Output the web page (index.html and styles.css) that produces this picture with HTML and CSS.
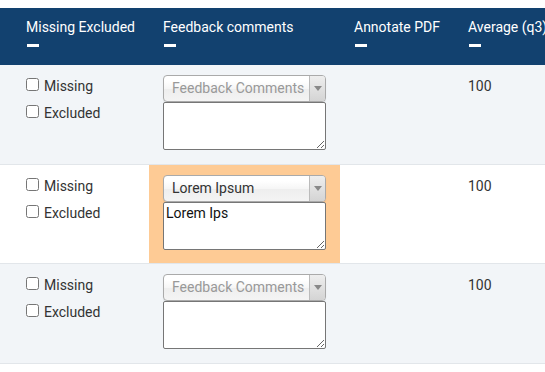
FILE: index.html
```html
<!DOCTYPE html>
<html>
<head>
<meta charset="utf-8">
<link rel="stylesheet" href="styles.css">
</head>
<body>
<div class="grid">
  <div class="row head">
    <div class="cell first"><div class="htext">Missing Excluded</div><span class="dash"></span></div>
    <div class="cell"><div class="htext">Feedback comments</div><span class="dash"></span></div>
    <div class="cell"><div class="htext">Annotate PDF</div><span class="dash"></span></div>
    <div class="cell"><div class="htext">Average (q3)</div><span class="dash"></span></div>
  </div>

  <div class="row body alt">
    <div class="cell first checks">
      <label class="chk"><input type="checkbox"><span>Missing</span></label>
      <label class="chk"><input type="checkbox"><span>Excluded</span></label>
    </div>
    <div class="cell fb">
      <div class="sel"><span class="sel-text placeholder">Feedback Comments</span><span class="sel-arrow"><i class="tri"></i></span></div>
      <textarea class="ta"></textarea>
    </div>
    <div class="cell"></div>
    <div class="cell num">100</div>
  </div>

  <div class="row body short">
    <div class="cell first checks">
      <label class="chk"><input type="checkbox"><span>Missing</span></label>
      <label class="chk"><input type="checkbox"><span>Excluded</span></label>
    </div>
    <div class="cell fb hl">
      <div class="sel"><span class="sel-text">Lorem Ipsum</span><span class="sel-arrow"><i class="tri"></i></span></div>
      <textarea class="ta">Lorem Ips</textarea>
    </div>
    <div class="cell"></div>
    <div class="cell num">100</div>
  </div>

  <div class="row body alt">
    <div class="cell first checks">
      <label class="chk"><input type="checkbox"><span>Missing</span></label>
      <label class="chk"><input type="checkbox"><span>Excluded</span></label>
    </div>
    <div class="cell fb">
      <div class="sel"><span class="sel-text placeholder">Feedback Comments</span><span class="sel-arrow"><i class="tri"></i></span></div>
      <textarea class="ta"></textarea>
    </div>
    <div class="cell"></div>
    <div class="cell num">100</div>
  </div>
</div>
</body>
</html>
```

FILE: styles.css
```css
html, body {
  margin: 0;
  padding: 0;
  background: #fff;
  overflow: hidden;
}
body {
  padding-top: 8px;
  font-family: Roboto, "Liberation Sans", sans-serif;
  font-size: 14px;
  color: #333;
  width: 545px;
}
.grid {
  width: 600px;
}
.row {
  display: grid;
  grid-template-columns: 149px 191px 114px 146px;
}
.cell {
  padding: 10px 14px 0 14px;
  white-space: nowrap;
  overflow: hidden;
}
.cell.first {
  padding-left: 26px;
}
.head {
  background: #12416f;
  color: #fff;
}
.head .cell {
  padding-top: 9px;
  padding-bottom: 18px;
}
.head .cell.first {
  padding-left: 26px;
}
.htext {
  line-height: 20px;
}
.dash {
  display: block;
  width: 12px;
  height: 3px;
  background: #fff;
  margin-top: 7px;
  margin-left: 1px;
}
.body {
  height: 100px;
  box-sizing: border-box;
  border-bottom: 1px solid #e2e6ea;
  background: #fff;
}
.body.short {
  height: 99px;
}
.body.alt {
  background: #f2f5f8;
}
.checks {
  display: flex;
  flex-direction: column;
  gap: 7px;
  padding-top: 11px;
}
.chk {
  display: flex;
  align-items: center;
  height: 20px;
  line-height: 20px;
}
.chk input {
  width: 13px;
  height: 13px;
  margin: -3px 5px 0 0;
}
.fb.hl {
  background: #fecb95;
}
.sel {
  display: flex;
  width: 163px;
  height: 27px;
  box-sizing: border-box;
  border: 1px solid #aaa;
  border-radius: 4px;
  background: linear-gradient(#fff 20%, #f6f6f6 50%, #eee 52%, #f4f4f4 100%);
  box-shadow: 0 1px 1px rgba(0, 0, 0, 0.08);
  overflow: hidden;
}
.sel-text {
  flex: 1;
  padding-left: 8px;
  line-height: 25px;
  color: #333;
  overflow: hidden;
}
.sel-text.placeholder {
  color: #999;
}
.sel-arrow {
  width: 15px;
  border-left: 1px solid #bbb;
  background: linear-gradient(#eee, #d4d4d4);
  display: flex;
  align-items: center;
  justify-content: center;
}
.tri {
  width: 0;
  height: 0;
  border-left: 4px solid transparent;
  border-right: 4px solid transparent;
  border-top: 5px solid #888;
}
.ta {
  display: block;
  width: 163px;
  height: 48px;
  box-sizing: border-box;
  margin: 0;
  padding: 2px;
  border: 1px solid #767676;
  border-radius: 2px;
  background: #fff;
  font-family: Roboto, "Liberation Sans", sans-serif;
  font-size: 14px;
  color: #111;
}
.num {
  padding-top: 11px;
  line-height: 20px;
}
```
